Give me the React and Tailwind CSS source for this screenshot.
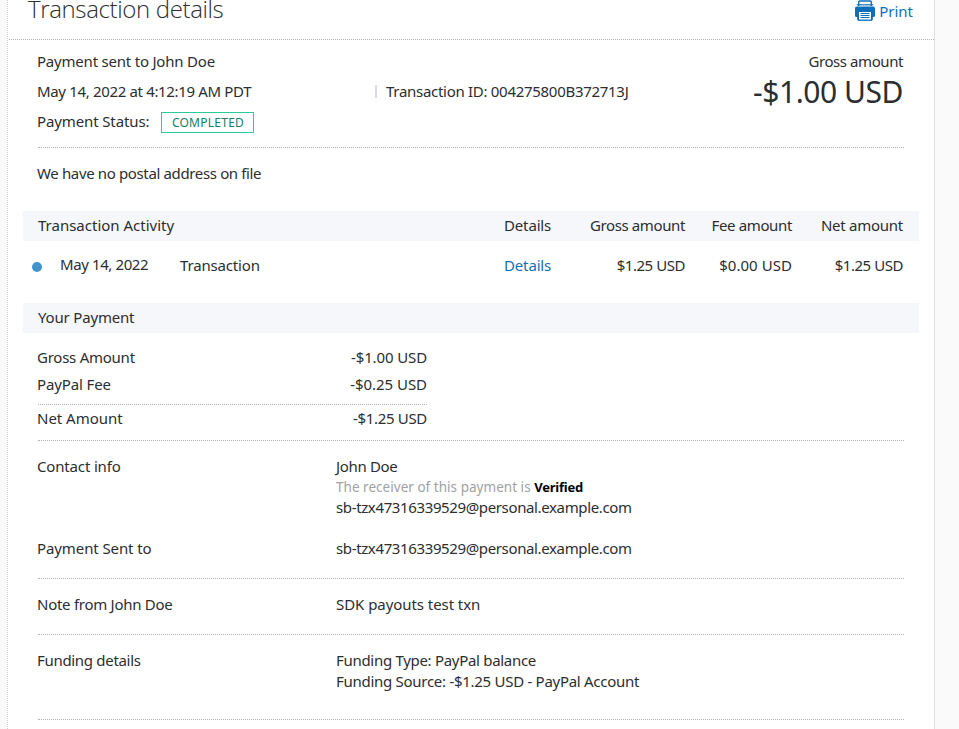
function PrintIcon() {
  return (
    <svg className="block h-[21px] w-[20px] shrink-0" viewBox="0 0 20 21" fill="none">
      <path d="M3.700 6V1.900Q3.700 1 4.600 1h10.800q.9 0 .9.900V6" stroke="#0f6fb8" strokeWidth="1.400" />
      <path d="M1.800 4.800h16.400" stroke="#0f6fb8" strokeWidth="1.200" />
      <path d="M1.800 6.500h16.400Q20 6.500 20 8.300v7.200q0 1.500-1.500 1.500h-17Q0 17 0 15.500V8.300Q0 6.500 1.800 6.500z" fill="#0f6fb8" />
      <rect x="2.700" y="12" width="14.600" height="8.300" rx=".6" fill="#0f6fb8" stroke="#0f6fb8" />
      <rect x="4" y="12" width="12" height="7.500" fill="#fff" />
      <path d="M5.500 13.500h9M5.500 15.500h9M5.500 17.500h9" stroke="#0f6fb8" strokeWidth="1" />
    </svg>
  );
}

const Divider = ({ className = "" }) => (
  <div className={`ml-px h-px border-t border-dotted border-[#b5b5b5] ${className}`} />
);

function Summary() {
  return (
    <section className="flex h-[107px] justify-between pt-[6px]">
      <div>
        <p className="h-[30px] tracking-[-0.21px]">Payment sent to John Doe</p>
        <div className="flex h-[30px] items-center">
          <p className="w-[338px] tracking-[-0.34px]">May 14, 2022 at 4:12:19 AM PDT</p>
          <span className="h-[13px] w-[2px] bg-[#d5dade]" />
          <p className="ml-[9px] tracking-[-0.29px]">Transaction ID: 004275800B372713J</p>
        </div>
        <div className="flex h-[30px] items-center">
          <p className="w-[124px] tracking-[-0.12px]">Payment Status:</p>
          <span className="mt-[2px] flex h-[21px] w-[93px] items-center justify-center border border-[#29cb97] pl-px text-[12px] leading-[19px] tracking-[0.25px] text-[#12806a]">
            COMPLETED
          </span>
        </div>
      </div>
      <div className="text-right">
        <p className="h-[30px] tracking-[-0.42px]">Gross amount</p>
        <p className="h-[30px] pt-px text-[30px] tracking-[-0.45px]">-$1.00 USD</p>
      </div>
    </section>
  );
}

function Activity() {
  return (
    <section>
      <div className="-mr-[16px] -ml-[14px] flex h-[30px] bg-[#f5f7fa] pr-[16px] pl-[14px] leading-[28px]">
        <p className="w-[467px] pl-px">Transaction Activity</p>
        <p className="w-[72px] tracking-[-0.15px]">Details</p>
        <p className="w-[109px] text-right tracking-[-0.38px]">Gross amount</p>
        <p className="w-[107px] text-right tracking-[-0.36px]">Fee amount</p>
        <p className="w-[111px] text-right tracking-[-0.26px]">Net amount</p>
      </div>
      <div className="-ml-[5px] flex h-[62px] pt-[9px]">
        <span className="mt-[12px] size-[10px] rounded-full bg-[#4293cc]" />
        <p className="-mt-px ml-[18px] w-[120px] tracking-[-0.4px]">May 14, 2022</p>
        <p className="w-[324px] tracking-[-0.17px]">Transaction</p>
        <a className="w-[72px] tracking-[-0.15px] text-[#0f6fb8]">Details</a>
        <p className="w-[109px] text-right tracking-[-0.45px]">$1.25 USD</p>
        <p className="w-[107px] text-right tracking-[0.05px]">$0.00 USD</p>
        <p className="w-[111px] text-right tracking-[-0.45px]">$1.25 USD</p>
      </div>
    </section>
  );
}

function Payment() {
  return (
    <section>
      <div className="-mr-[16px] -ml-[14px] h-[30px] bg-[#f5f7fa] pl-[15px] leading-[28px] tracking-[-0.18px]">
        Your Payment
      </div>
      <div className="w-[390px] pt-[11px] leading-[27px]">
        <div className="flex h-[27px] justify-between">
          <p className="tracking-[-0.25px]">Gross Amount</p>
          <p className="tracking-[-0.12px]">-$1.00 USD</p>
        </div>
        <div className="flex h-[33px] justify-between">
          <p className="tracking-[-0.12px]">PayPal Fee</p>
          <p className="tracking-[-0.05px]">-$0.25 USD</p>
        </div>
        <Divider />
        <div className="flex h-[35px] justify-between">
          <p className="tracking-[-0.02px]">Net Amount</p>
          <p className="tracking-[-0.32px]">-$1.25 USD</p>
        </div>
      </div>
    </section>
  );
}

function Info({ label, className, children }) {
  return (
    <div className={`flex leading-[21px] ${className}`}>
      <div className="w-[299px] shrink-0">{label}</div>
      <div>{children}</div>
    </div>
  );
}

export default function App() {
  return (
    <div className="h-[729px] overflow-hidden bg-[#fafafa] pl-[7px] font-['Noto_Sans',sans-serif] text-[15px] leading-[30px] whitespace-nowrap text-[#2c2e2f]">
      <main className="h-full w-[928px] border-r border-l border-r-[#dfdfdf] border-l-[#cfcfcf] bg-white [border-left-style:dotted]">
        <header className="flex h-[39px] justify-between pr-[21px] pl-[20px]">
          <h1 className="-mt-[6px] font-['Open_Sans',sans-serif] text-[24px] font-light tracking-[-0.36px]">
            Transaction details
          </h1>
          <div className="flex h-[21px] items-center gap-[4px] text-[#0f6fb8]">
            <PrintIcon />
            <span className="mt-px">Print</span>
          </div>
        </header>
        <Divider className="-ml-px" />
        <div className="pr-[31px] pl-[29px]">
          <Summary />
          <Divider className="-mr-px" />
          <p className="h-[63px] pt-[10px] tracking-[-0.36px]">We have no postal address on file</p>
          <Activity />
          <Payment />
          <Divider className="-mr-px" />
          <Info label={<span className="tracking-[-0.16px]">Contact info</span>} className="h-[97px] pt-[15px]">
            <p className="tracking-[-0.33px]">John Doe</p>
            <p className="h-[20px] text-[13.5px] leading-[20px] tracking-[0.03px] text-[#9da3a6]">
              The receiver of this payment is{" "}
              <b className="text-[13px] tracking-[-0.2px] text-black">Verified</b>
            </p>
            <p className="tracking-[-0.37px]">sb-tzx47316339529@personal.example.com</p>
          </Info>
          <Info label={<span className="tracking-[-0.1px]">Payment Sent to</span>} className="h-[40px]">
            <p className="tracking-[-0.37px]">sb-tzx47316339529@personal.example.com</p>
          </Info>
          <Divider className="-mr-px" />
          <Info label={<span className="tracking-[-0.27px]">Note from John Doe</span>} className="h-[55px] pt-[15px]">
            <p className="tracking-[-0.06px]">SDK payouts test txn</p>
          </Info>
          <Divider className="-mr-px" />
          <Info label={<span className="tracking-[-0.31px]">Funding details</span>} className="h-[84px] pt-[15px]">
            <p className="tracking-[-0.3px]">Funding Type: PayPal balance</p>
            <p className="tracking-[-0.28px]">Funding Source: -$1.25 USD - PayPal Account</p>
          </Info>
          <Divider className="-mr-px" />
        </div>
      </main>
    </div>
  );
}
